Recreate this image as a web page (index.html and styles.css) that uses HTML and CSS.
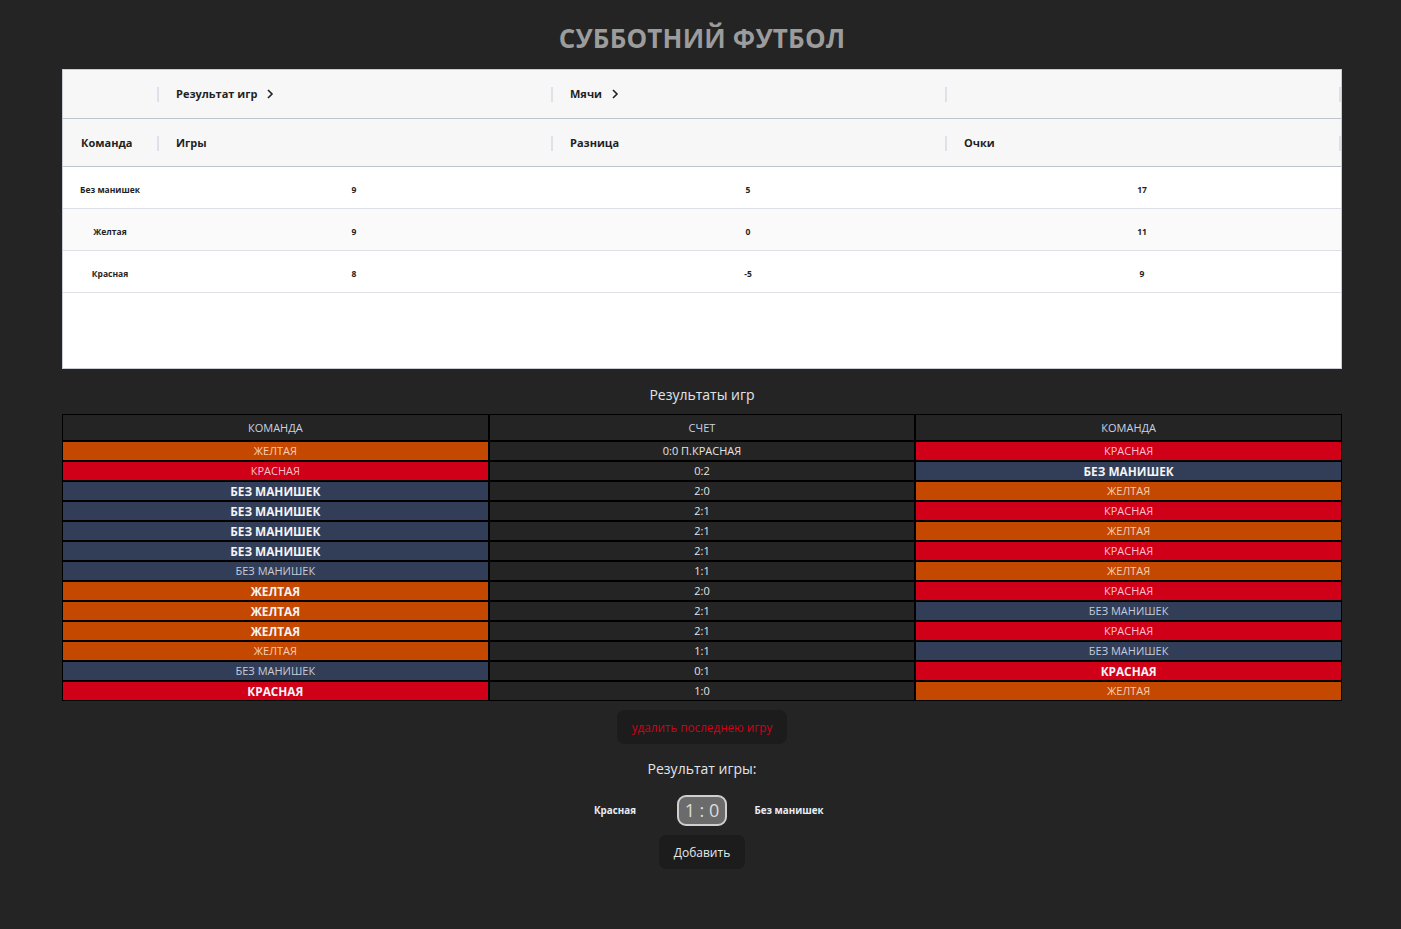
FILE: index.html
```html
<!DOCTYPE html>
<html lang="ru">
<head>
<meta charset="utf-8">
<title>Субботний футбол</title>
<link rel="stylesheet" href="styles.css">
</head>
<body>
<div class="page">
<h1 class="title">СУББОТНИЙ ФУТБОЛ</h1>

<div class="grid">
  <div class="grid-row head-row band">
    <div class="gcell c-team"></div>
    <div class="gcell c-col"><span class="sep"></span><span class="htext">Результат игр</span><svg class="chev" width="8" height="10" viewBox="0 0 8 10"><path d="M2 1 L6 5 L2 9" fill="none" stroke="#222" stroke-width="1.6"/></svg></div>
    <div class="gcell c-col"><span class="sep"></span><span class="htext">Мячи</span><svg class="chev" width="8" height="10" viewBox="0 0 8 10"><path d="M2 1 L6 5 L2 9" fill="none" stroke="#222" stroke-width="1.6"/></svg></div>
    <div class="gcell c-col"><span class="sep"></span></div>
    <div class="gcell c-end"><span class="sep"></span></div>
  </div>
  <div class="grid-row head-row">
    <div class="gcell c-team"><span class="htext">Команда</span></div>
    <div class="gcell c-col"><span class="sep"></span><span class="htext">Игры</span></div>
    <div class="gcell c-col"><span class="sep"></span><span class="htext">Разница</span></div>
    <div class="gcell c-col"><span class="sep"></span><span class="htext">Очки</span></div>
    <div class="gcell c-end"><span class="sep"></span></div>
  </div>
  <div class="grid-row data-row">
    <div class="gcell c-team center">Без манишек</div>
    <div class="gcell c-col center">9</div>
    <div class="gcell c-col center">5</div>
    <div class="gcell c-col center">17</div>
    <div class="gcell c-end"></div>
  </div>
  <div class="grid-row data-row alt">
    <div class="gcell c-team center">Желтая</div>
    <div class="gcell c-col center">9</div>
    <div class="gcell c-col center">0</div>
    <div class="gcell c-col center">11</div>
    <div class="gcell c-end"></div>
  </div>
  <div class="grid-row data-row">
    <div class="gcell c-team center">Красная</div>
    <div class="gcell c-col center">8</div>
    <div class="gcell c-col center">-5</div>
    <div class="gcell c-col center">9</div>
    <div class="gcell c-end"></div>
  </div>
</div>

<h2 class="caption">Результаты игр</h2>

<table class="results">
  <thead>
    <tr><th>КОМАНДА</th><th>СЧЕТ</th><th>КОМАНДА</th></tr>
  </thead>
  <tbody>
    <tr><td class="y">ЖЕЛТАЯ</td><td class="s">0:0 П.КРАСНАЯ</td><td class="r">КРАСНАЯ</td></tr>
    <tr><td class="r">КРАСНАЯ</td><td class="s">0:2</td><td class="n b">БЕЗ МАНИШЕК</td></tr>
    <tr><td class="n b">БЕЗ МАНИШЕК</td><td class="s">2:0</td><td class="y">ЖЕЛТАЯ</td></tr>
    <tr><td class="n b">БЕЗ МАНИШЕК</td><td class="s">2:1</td><td class="r">КРАСНАЯ</td></tr>
    <tr><td class="n b">БЕЗ МАНИШЕК</td><td class="s">2:1</td><td class="y">ЖЕЛТАЯ</td></tr>
    <tr><td class="n b">БЕЗ МАНИШЕК</td><td class="s">2:1</td><td class="r">КРАСНАЯ</td></tr>
    <tr><td class="n">БЕЗ МАНИШЕК</td><td class="s">1:1</td><td class="y">ЖЕЛТАЯ</td></tr>
    <tr><td class="y b">ЖЕЛТАЯ</td><td class="s">2:0</td><td class="r">КРАСНАЯ</td></tr>
    <tr><td class="y b">ЖЕЛТАЯ</td><td class="s">2:1</td><td class="n">БЕЗ МАНИШЕК</td></tr>
    <tr><td class="y b">ЖЕЛТАЯ</td><td class="s">2:1</td><td class="r">КРАСНАЯ</td></tr>
    <tr><td class="y">ЖЕЛТАЯ</td><td class="s">1:1</td><td class="n">БЕЗ МАНИШЕК</td></tr>
    <tr><td class="n">БЕЗ МАНИШЕК</td><td class="s">0:1</td><td class="r b">КРАСНАЯ</td></tr>
    <tr><td class="r b">КРАСНАЯ</td><td class="s">1:0</td><td class="y">ЖЕЛТАЯ</td></tr>
  </tbody>
</table>

<div class="actions">
  <button class="btn btn-delete">удалить последнею игру</button>
  <div class="result-label">Результат игры:</div>
  <div class="score-row">
    <div class="team-label">Красная</div>
    <div class="score-box">1 : 0</div>
    <div class="team-label">Без манишек</div>
  </div>
  <button class="btn btn-add">Добавить</button>
</div>
</div>
</body>
</html>
```

FILE: styles.css
```css
* { box-sizing: border-box; }

body {
  margin: 0;
  background: #242424;
  font-family: "Open Sans", "Noto Sans", sans-serif;
  color: #ddd;
}

.page {
  width: 1280px;
  margin-left: 62px;
  padding-bottom: 60px;
}

.title {
  margin: 0;
  padding-top: 22px;
  height: 69px;
  text-align: center;
  font-size: 26px;
  line-height: 32px;
  font-weight: 700;
  color: #9c9c9c;
  letter-spacing: 0.2px;
}

/* top grid */
.grid {
  height: 300px;
  background: #fff;
  border: 1px solid #c9ccd3;
  color: #1f1f24;
}

.grid-row {
  display: flex;
  align-items: center;
}

.head-row {
  background: #f7f7f7;
  height: 48px;
  border-bottom: 1px solid #bfc4cc;
}

.band { height: 49px; }

.data-row {
  height: 42px;
  border-bottom: 1px solid #dde0e8;
  font-size: 8.5px;
  font-weight: 700;
}

.data-row .gcell { padding-top: 4px; }

.data-row.alt { background: #fafafa; }

.gcell {
  display: flex;
  align-items: center;
  height: 100%;
  position: relative;
}

.c-team { width: 94px; padding-left: 18px; }
.c-col { width: 394px; padding-left: 19px; }
.c-end { flex: 1; }

.center { justify-content: center; padding-left: 0; }

.sep {
  position: absolute;
  left: 0;
  top: 50%;
  margin-top: -7px;
  width: 2px;
  height: 15px;
  background: #dde1ea;
}

.htext {
  font-size: 11px;
  font-weight: 700;
  color: #1f1f24;
}

.band .htext { margin-top: -1px; }

.chev { margin-left: 9px; }

/* results */
.caption {
  margin: 0;
  padding-top: 16px;
  height: 45px;
  text-align: center;
  font-size: 14px;
  font-weight: 400;
  line-height: 20px;
  color: #e0e4ea;
}

.results {
  width: 1280px;
  border-collapse: separate;
  border-spacing: 0;
  background: #000;
  table-layout: fixed;
  font-size: 11px;
}

.results th,
.results td {
  border: 1px solid #000;
  text-align: center;
  padding: 0;
  line-height: 18px;
}

.results th {
  height: 27px;
  background: #242424;
  font-weight: 400;
  color: #c9d2e2;
}

.results td { height: 20px; }

.results td.s { background: #242424; color: #e4e4e4; }
.results td.y { background: #c54800; color: rgba(255, 232, 220, 0.85); }
.results td.r { background: #d00018; color: rgba(255, 220, 228, 0.9); }
.results td.n { background: #323e58; color: #c5ccda; }
.results td.b { font-weight: 700; color: #f4f4f8; font-size: 11.8px; }

/* actions */
.actions {
  display: flex;
  flex-direction: column;
  align-items: center;
  padding-top: 9px;
}

.btn {
  border: none;
  font-family: inherit;
  background: #1c1c1c;
  cursor: pointer;
}

.btn-delete {
  height: 34px;
  padding: 0 15px;
  border-radius: 8px;
  color: #d00018;
  font-size: 11.7px;
}

.result-label {
  margin-top: 16px;
  font-size: 14px;
  line-height: 18px;
  color: #e0e4ea;
}

.score-row {
  display: flex;
  align-items: center;
  gap: 12px;
  margin-top: 17px;
}

.team-label {
  width: 100px;
  text-align: center;
  font-size: 9.8px;
  font-weight: 700;
  color: #e8ecf4;
}

.score-box {
  width: 50px;
  height: 31px;
  border: 2px solid #cfcfcf;
  border-radius: 9px;
  background: #6b6b6b;
  color: #dcdcdc;
  font-size: 18px;
  line-height: 27px;
  text-align: center;
}

.btn-add {
  margin-top: 9px;
  height: 34px;
  width: 86px;
  border-radius: 7px;
  color: #e4e8ee;
  font-size: 12px;
}
```
